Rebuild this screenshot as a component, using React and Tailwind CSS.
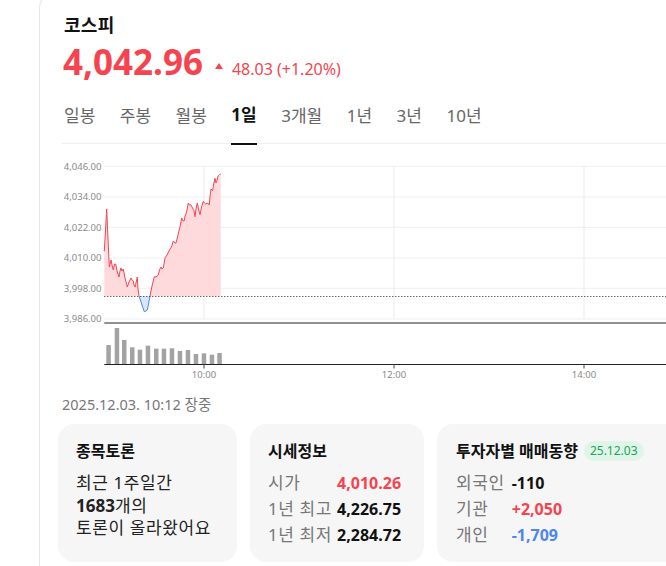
import React from "react";

const FONT = { fontFamily: '"Noto Sans", "Noto Sans CJK KR", sans-serif' };

const pts = [[104.3,252.3],[106.7,210],[108,240],[109.3,268],[111,261],[112,266],[113.3,271],[114.5,265],[115.7,265],[117,272],[119,278],[120,272],[121,269],[122,272],[123.3,270],[125,279],[127.3,288],[129,283],[131,279],[132,281],[133.3,282],[134,286],[135,288],[136,284],[137.3,278],[138,290],[139,297],[141,303],[143,309],[144.3,312.7],[146,312],[147.3,311],[148.5,305],[150,297],[152,287],[154.3,277.7],[156,278],[158.3,276],[159.5,271],[161,268],[162,270],[163.3,269],[165,259],[167,256],[168.5,253],[170,250],[171.5,248],[173.3,242],[175,244],[176,244],[178,236],[180,227.7],[181.7,219],[183,222],[184.3,221.7],[185,217],[186,215],[187,211],[188.3,204],[189.5,206],[190.7,205.7],[192,208],[194,211.7],[195,217.7],[196,210],[197.3,204],[198.5,210],[200,215.7],[201.5,208],[203.3,202.3],[204.5,204],[205.7,205],[207.5,204],[209.3,206],[210,197],[211,190],[212.7,191.7],[213.5,186],[215,179.3],[216,184],[216.7,182.7],[217.5,179],[218.3,176.7],[219.5,175.5],[220.7,175]];

const linePath = pts.map((p, i) => `${i ? "L" : "M"}${p[0]},${p[1]}`).join(" ");
const areaPath = `${linePath} L220.7,297 L104.3,297 Z`;

const bars = [[106.3,346],[114.7,329],[122,341],[130,348.3],[137.7,350.7],[145.7,346.7],[154,349.7],[161.7,349.7],[169.7,349.3],[177.7,352],[185.7,351],[193.7,355],[201.7,354.3],[209.7,355.7],[217.3,354]];

const yLabels = [["4,046.00",167.3],["4,034.00",198],["4,022.00",228.3],["4,010.00",259],["3,998.00",289.3],["3,986.00",320]];

function Chart() {
  return (
    <svg width="604" height="250" viewBox="62 145 604 250" className="block -ml-[2px]">
      <defs>
        <clipPath id="above"><rect x="100" y="140" width="600" height="157" /></clipPath>
        <clipPath id="below"><rect x="100" y="297" width="600" height="40" /></clipPath>
      </defs>
      {yLabels.map(([t, y]) => (
        <g key={t}>
          <line x1="104" x2="666" y1={y} y2={y} stroke="#efefef" strokeWidth="1" />
          <text x="101.5" y={y + 3.3} textAnchor="end" fontSize="9.5" fill="#8a8a8a" style={FONT}>{t}</text>
        </g>
      ))}
      {[204, 394, 584].map((x) => (
        <line key={x} x1={x} x2={x} y1="167" y2="320" stroke="#ebebeb" strokeWidth="1" />
      ))}
      <path d={areaPath} fill="#ffdadd" clipPath="url(#above)" />
      <path d={areaPath} fill="#d8e5fa" clipPath="url(#below)" />
      <path d={linePath} fill="none" stroke="#f5444f" strokeWidth="1" clipPath="url(#above)" />
      <path d={linePath} fill="none" stroke="#4d86ee" strokeWidth="1" clipPath="url(#below)" />
      <line x1="104.3" x2="666" y1="297.5" y2="297.5" stroke="#222" strokeWidth="1" strokeDasharray="1 2" />
      <line x1="104.3" x2="666" y1="324" y2="324" stroke="#222" strokeWidth="1.2" />
      {bars.map(([x, y], i) => (
        <rect key={i} x={x} y={y} width="4.5" height={365.3 - y} fill="#a3a3a3" />
      ))}
      <line x1="104.3" x2="666" y1="365.5" y2="365.5" stroke="#222" strokeWidth="1.2" />
      {[["10:00", 204], ["12:00", 394], ["14:00", 584]].map(([t, x]) => (
        <g key={t}>
          <line x1={x} x2={x} y1="365" y2="369.5" stroke="#444" strokeWidth="1" />
          <text x={x} y="379" textAnchor="middle" fontSize="9.5" fill="#8a8a8a" style={FONT}>{t}</text>
        </g>
      ))}
    </svg>
  );
}

const tabs = ["일봉", "주봉", "월봉", "1일", "3개월", "1년", "3년", "10년"];

export default function App() {
  return (
    <div className="w-[666px] h-[566px] overflow-hidden bg-white" style={FONT}>
      <div className="ml-[39px] -mt-[8px] h-[600px] border-l border-t border-[#e6e6e6] rounded-tl-2xl pl-[24px] pt-[20px]">
        <div className="text-[18px] leading-[24px] font-bold text-[#111] tracking-[0.3px]">코스피</div>
        <div className="mt-[3px] flex items-baseline h-[44px]">
          <span className="text-[35px] leading-[44px] font-bold text-[#f5444f] -ml-[1px]">4,042.96</span>
          <span className="ml-[12px] mr-[9px] inline-block w-0 h-0 border-l-[4.5px] border-r-[4.5px] border-b-[6px] border-l-transparent border-r-transparent border-b-[#f5444f] -translate-y-[6px]"></span>
          <span className="text-[16px] text-[#f5444f]">48.03 (+1.20%)</span>
        </div>
        <div className="mt-[4px] flex gap-[24.5px] border-b border-[#eeeeee] h-[56px] -ml-[2px] pl-[2px]">
          {tabs.map((t) => (
            <div
              key={t}
              className={
                t === "1일"
                  ? "h-[57px] flex items-center text-[17px] font-bold text-[#111] border-b-2 border-[#111] pb-[1px]"
                  : "h-[56px] flex items-center text-[17px] text-[#666]"
              }
            >
              {t}
            </div>
          ))}
        </div>
        <Chart />
        <div className="text-[14.5px] leading-[20px] text-[#777] -ml-[2px]">2025.12.03. 10:12 장중</div>
        <div className="mt-[10px] -ml-[6px] flex gap-[13px]">
          <div className="w-[179px] h-[138px] shrink-0 rounded-2xl bg-[#f6f6f6] px-[18px] pt-[16px]">
            <div className="text-[16px] leading-[22px] font-bold text-[#111]">종목토론</div>
            <div className="mt-[10px] text-[17px] leading-[22.5px] tracking-[0.6px] text-[#222]">
              <div>최근 1주일간</div>
              <div><span className="font-bold tracking-normal">1683</span>개의</div>
              <div>토론이 올라왔어요</div>
            </div>
          </div>
          <div className="w-[174px] h-[138px] shrink-0 rounded-2xl bg-[#f6f6f6] px-[18px] pt-[16px]">
            <div className="text-[16px] leading-[22px] font-bold text-[#111]">시세정보</div>
            <div className="mt-[8px] grid grid-cols-[auto_auto] justify-start gap-x-[5px] leading-[26px]">
              <span className="text-[17px] tracking-[0.6px] text-[#777]">시가</span>
              <span className="text-[16px] font-bold text-[#f5444f]">4,010.26</span>
              <span className="text-[17px] tracking-[0.6px] text-[#777]">1년 최고</span>
              <span className="text-[16px] font-bold text-[#111]">4,226.75</span>
              <span className="text-[17px] tracking-[0.6px] text-[#777]">1년 최저</span>
              <span className="text-[16px] font-bold text-[#111]">2,284.72</span>
            </div>
          </div>
          <div className="w-[250px] h-[138px] shrink-0 rounded-2xl bg-[#f6f6f6] px-[19px] pt-[16px]">
            <div className="flex items-center gap-[6px]">
              <span className="text-[16px] leading-[22px] font-bold text-[#111]">투자자별 매매동향</span>
              <span className="h-[20px] px-[6px] rounded-full bg-[#e0f4e8] text-[12px] leading-[20px] text-[#18a661]">25.12.03</span>
            </div>
            <div className="mt-[8px] grid grid-cols-[auto_auto] justify-start gap-x-[7px] leading-[26px]">
              <span className="text-[17px] tracking-[0.6px] text-[#777]">외국인</span>
              <span className="text-[16px] font-bold text-[#111]">-110</span>
              <span className="text-[17px] tracking-[0.6px] text-[#777]">기관</span>
              <span className="text-[16px] font-bold text-[#f5444f]">+2,050</span>
              <span className="text-[17px] tracking-[0.6px] text-[#777]">개인</span>
              <span className="text-[16px] font-bold text-[#4d86ee]">-1,709</span>
            </div>
          </div>
        </div>
      </div>
    </div>
  );
}
